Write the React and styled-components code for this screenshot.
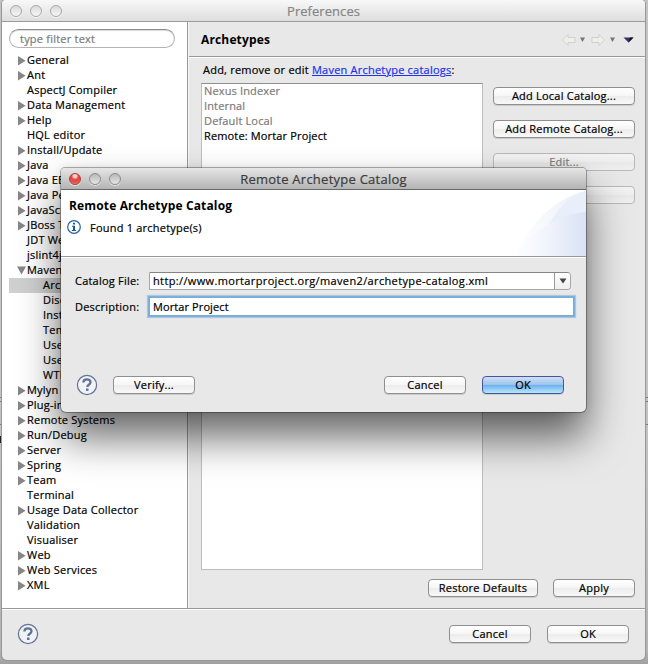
import React from 'react'
import styled, { createGlobalStyle } from 'styled-components'

const tree = [
    { label: 'General', open: false },
    { label: 'Ant', open: false },
    { label: 'AspectJ Compiler' },
    { label: 'Data Management', open: false },
    { label: 'Help', open: false },
    { label: 'HQL editor' },
    { label: 'Install/Update', open: false },
    { label: 'Java', open: false },
    { label: 'Java EE', open: false },
    { label: 'Java Persistence', open: false },
    { label: 'JavaScript', open: false },
    { label: 'JBoss Tools', open: false },
    { label: 'JDT Weaving' },
    { label: 'jslint4java' },
    { label: 'Maven', open: true },
    { label: 'Archetypes', child: true, selected: true },
    { label: 'Discovery', child: true },
    { label: 'Installations', child: true },
    { label: 'Templates', child: true },
    { label: 'User Interface', child: true },
    { label: 'User Settings', child: true },
    { label: 'WTP Integration', child: true },
    { label: 'Mylyn', open: false },
    { label: 'Plug-in Development', open: false },
    { label: 'Remote Systems', open: false },
    { label: 'Run/Debug', open: false },
    { label: 'Server', open: false },
    { label: 'Spring', open: false },
    { label: 'Team', open: false },
    { label: 'Terminal' },
    { label: 'Usage Data Collector', open: false },
    { label: 'Validation' },
    { label: 'Visualiser' },
    { label: 'Web', open: false },
    { label: 'Web Services', open: false },
    { label: 'XML', open: false },
]

const catalogs = [
    { name: 'Nexus Indexer' },
    { name: 'Internal' },
    { name: 'Default Local' },
    { name: 'Remote: Mortar Project', editable: true },
]

const Lights = ({ active }) => (
    <LightGroup>
        <Light $red={active} />
        <Light $dark={active} />
        <Light $dark={active} />
    </LightGroup>
)

const Disclosure = ({ open }) => (
    <svg width="9" height="10" viewBox="0 0 9 10">
        <path d={open ? 'M0 .5h9l-4.5 8z' : 'M1 0v9.4l7.6-4.7z'} fill="#868686" />
    </svg>
)

const HelpIcon = () => (
    <svg width="22" height="22" viewBox="0 0 22 22" fill="none">
        <circle cx="11" cy="11" r="9.6" fill="#f0f2f5" stroke="#607391" strokeWidth="1.2" />
        <path d="M7.4 8.5c0-4.3 7.1-4.1 7.1-.3 0 2.5-3.2 2.6-3.2 4.8" stroke="#5f7393" strokeWidth="2.3" />
        <path d="M10 14.5h2.5v2.4H10z" fill="#5f7393" />
    </svg>
)

const InfoIcon = () => (
    <svg width="14" height="14" viewBox="0 0 14 14" fill="none">
        <circle cx="7" cy="7" r="6.3" fill="#fff" stroke="#22649d" strokeWidth="1.2" />
        <path d="M6 2.7h2v1.8H6zM5 5.8h3v4.3h1.1v1H4.9v-1H6V6.8H5z" fill="#125a97" />
    </svg>
)

const HistoryArrow = ({ forward }) => (
    <svg width="15" height="14" viewBox="0 0 15 14">
        <path
            d={forward ? 'M1 4.5h7V1.5l5.5 5.5L8 12.5v-3H1z' : 'M14 4.5H7V1.5L1.5 7 7 12.5v-3h7z'}
            fill="#eeeeea" stroke="#cfcfcb"
        />
    </svg>
)

const SmallArrow = () => (
    <svg width="5" height="5" viewBox="0 0 5 5"><path d="M0 .5h5L2.5 5z" fill="#777" /></svg>
)

const Banner = () => (
    <svg width="100" height="66" viewBox="0 0 100 66">
        <defs>
            <linearGradient id="swoosh" x1="0" x2="1" y1="0" y2="0">
                <stop offset="0" stopColor="#fff" />
                <stop offset=".5" stopColor="#eff3fb" />
                <stop offset="1" stopColor="#dae2f5" />
            </linearGradient>
            <linearGradient id="haze" x1="0" x2="1" y1="0" y2="0">
                <stop offset="0" stopColor="#fff" />
                <stop offset="1" stopColor="#eaeffa" />
            </linearGradient>
        </defs>
        <path d="M28 66C45 33 68 8 100 1v65z" fill="url(#haze)" />
        <path d="M62 36C72 18 84 5 100 1v34z" fill="#e8eefa" />
        <path d="M28 66C45 43 72 23 100 22v44z" fill="url(#swoosh)" />
    </svg>
)

const App = () => {
    return (
        <Desktop>
            <GlobalStyle />
            <Window>
                <TitleBar>
                    <Lights />
                    <Title>Preferences</Title>
                </TitleBar>

                <Main>
                    <Sidebar>
                        <Filter>type filter text</Filter>
                        {tree.map((item) => (
                            <TreeRow key={item.label} $child={item.child} $selected={item.selected}>
                                <Twisty>{item.open !== undefined && <Disclosure open={item.open} />}</Twisty>
                                {item.label}
                            </TreeRow>
                        ))}
                    </Sidebar>

                    <Page>
                        <PageHeader>
                            <Heading>Archetypes</Heading>
                            <History>
                                <HistoryArrow />
                                <SmallArrow />
                                <HistoryArrow forward />
                                <SmallArrow />
                                <svg width="11" height="6" viewBox="0 0 11 6">
                                    <path d="M.5 .5h10L5.5 5.5z" fill="#35316f" />
                                    <path d="M5.5 5.5l5-5H7z" fill="#111" />
                                </svg>
                            </History>
                        </PageHeader>

                        <Intro>Add, remove or edit <a href="#catalogs">Maven Archetype catalogs</a>:</Intro>

                        <Columns>
                            <CatalogList>
                                {catalogs.map((catalog) => (
                                    <CatalogRow key={catalog.name} $editable={catalog.editable}>{catalog.name}</CatalogRow>
                                ))}
                            </CatalogList>
                            <Actions>
                                <Button>Add Local Catalog...</Button>
                                <Button>Add Remote Catalog...</Button>
                                <Button disabled>Edit...</Button>
                                <Button disabled>Remove</Button>
                            </Actions>
                        </Columns>

                        <PageButtons>
                            <Button $width={110}>Restore Defaults</Button>
                            <Button $width={82}>Apply</Button>
                        </PageButtons>
                    </Page>
                </Main>

                <Footer>
                    <HelpIcon />
                    <ButtonGroup>
                        <Button $width={82}>Cancel</Button>
                        <Button $width={82}>OK</Button>
                    </ButtonGroup>
                </Footer>
            </Window>

            <Dialog>
                <TitleBar $active>
                    <Lights active />
                    <Title $active>Remote Archetype Catalog</Title>
                </TitleBar>
                <DialogHeader>
                    <DialogText>
                        <Heading>Remote Archetype Catalog</Heading>
                        <Message><InfoIcon /> Found 1 archetype(s)</Message>
                    </DialogText>
                    <Banner />
                </DialogHeader>
                <Form>
                    <Field>
                        <FieldName>Catalog File:</FieldName>
                        <Combo>
                            <ComboText>http://www.mortarproject.org/maven2/archetype-catalog.xml</ComboText>
                            <ComboArrow>
                                <svg width="8" height="6" viewBox="0 0 8 6"><path d="M.5 .5h7L4 5.5z" fill="#444" /></svg>
                            </ComboArrow>
                        </Combo>
                    </Field>
                    <Field>
                        <FieldName>Description:</FieldName>
                        <TextInput>Mortar Project</TextInput>
                    </Field>
                </Form>
                <DialogFooter>
                    <HelpIcon />
                    <Verify><Button $width={82}>Verify...</Button></Verify>
                    <ButtonGroup>
                        <Button $width={82}>Cancel</Button>
                        <Button $width={82} $primary>OK</Button>
                    </ButtonGroup>
                </DialogFooter>
            </Dialog>
        </Desktop>
    )
}

export default App

const GlobalStyle = createGlobalStyle`
    * {
        box-sizing: border-box;
    }

    body {
        margin: 0;
        overflow: hidden;
        font-family: 'Open Sans', 'Noto Sans', sans-serif;
        font-size: 11px;
        letter-spacing: 0.22px;
        color: #000;
        -webkit-text-stroke: 0.2px;
    }

    svg {
        display: block;
        flex: none;
    }
`

const Desktop = styled.div`
    position: relative;
    width: 648px;
    height: 664px;
    padding: 0 3px 4px 2px;
    background:
        linear-gradient(#2a2024, #2a2024) 0 436px / 2px 7px no-repeat,
        linear-gradient(#7c7c7c, #7c7c7c) 0 397px / 100% 1px no-repeat,
        linear-gradient(#7c7c7c, #7c7c7c) 0 401px / 100% 1px no-repeat,
        linear-gradient(#7c7c7c, #7c7c7c) 0 424px / 100% 1px no-repeat,
        linear-gradient(#c4c4c4, #c4c4c4 60%, #b4b4b4 98%, #a0a0a0);
`

const Window = styled.div`
    display: flex;
    flex-direction: column;
    height: 660px;
    background: #e8e8e8;
    border-radius: 4px 4px 5px 5px;
    box-shadow: 0 0 0 1px #979797;
    overflow: hidden;
`

const TitleBar = styled.div`
    position: relative;
    display: flex;
    align-items: center;
    justify-content: center;
    flex: none;
    height: 22px;
    background: ${({ $active }) => ($active ? 'linear-gradient(#e6e6e6, #b4b4b4)' : 'linear-gradient(#f8f8f8, #dedede)')};
    border-bottom: 1px solid ${({ $active }) => ($active ? '#686868' : '#9b9b9b')};
`

const LightGroup = styled.div`
    position: absolute;
    left: 8px;
    top: 5px;
    display: flex;
    gap: 8px;
`

const Light = styled.span`
    width: 12px;
    height: 12px;
    border-radius: 50%;
    border: 1px solid ${({ $red, $dark }) => ($red ? '#a3413c' : $dark ? '#8c8c8c' : '#a9a9a9')};
    background: ${({ $red, $dark }) => {
        if ($red) return 'radial-gradient(circle at 50% 20%, #fbd0cc 0 15%, #e5443f 40%, #e2504a 65%, #ff9c94)'
        return $dark ? 'linear-gradient(#b8b8b8, #e6e6e6)' : 'linear-gradient(#dadada, #f6f6f6)'
    }};
    box-shadow: 0 1px 0 rgba(255, 255, 255, 0.6);
`

const Title = styled.span`
    font-size: 13px;
    letter-spacing: ${({ $active }) => ($active ? 0.25 : 0.05)}px;
    color: ${({ $active }) => ($active ? '#3c3c3c' : '#858585')};
`

const Main = styled.div`
    display: flex;
    height: 587px;
    border-bottom: 1px solid #999;
`

const Sidebar = styled.div`
    width: 186px;
    flex: none;
    background: #fff;
    border-right: 1px solid #999;
`

const Filter = styled.div`
    width: 166px;
    height: 19px;
    margin: 7px 0 5px 7px;
    padding-left: 10px;
    line-height: 18px;
    color: #7b7b7b;
    border: 1px solid #b4b4b4;
    border-top-color: #8c8c8c;
    border-radius: 10px;
    box-shadow: inset 0 1px 1px #d9d9d9;
`

const TreeRow = styled.div`
    display: flex;
    height: 15px;
    margin-left: 7px;
    padding-left: ${({ $child }) => ($child ? 24 : 8)}px;
    line-height: 13px;
    white-space: nowrap;
    background: ${({ $selected }) => ($selected ? '#d0d0d0' : 'none')};
`

const Twisty = styled.span`
    display: flex;
    align-items: center;
    width: 10px;
    flex: none;
`

const Page = styled.div`
    flex: 1;
    border-left: 1px solid #f7f7f7;
`

const PageHeader = styled.div`
    display: flex;
    align-items: center;
    justify-content: space-between;
    height: 35px;
    padding: 0 11px 0 12px;
    border-bottom: 1px solid #999;
    box-shadow: 0 1px 0 #fff;
`

const Heading = styled.div`
    font-size: 12px;
    font-weight: bold;
    letter-spacing: 0.15px;
    -webkit-text-stroke: 0;
`

const History = styled.div`
    display: flex;
    align-items: center;
    gap: 4px;
    padding-top: 1px;

    svg:nth-child(3) {
        margin-left: 2px;
    }

    svg:last-child {
        margin-left: 4px;
    }
`

const Intro = styled.div`
    height: 26px;
    padding-left: 14px;
    line-height: 26px;

    a {
        color: #1d32ee;
    }
`

const Columns = styled.div`
    display: flex;
    padding-left: 12px;
`

const CatalogList = styled.div`
    width: 282px;
    height: 487px;
    padding: 0 2px;
    background: #fff;
    border: 1px solid #bdbdbd;
    border-top-color: #8e8e8e;
`

const CatalogRow = styled.div`
    height: 15px;
    line-height: 13px;
    letter-spacing: 0.15px;
    color: ${({ $editable }) => ($editable ? '#000' : '#7b7b7b')};
`

const Actions = styled.div`
    display: flex;
    flex-direction: column;
    gap: 15px;
    width: 142px;
    margin: 4px 0 0 10px;
`

const Button = styled.button`
    width: ${({ $width }) => ($width ? `${$width}px` : '100%')};
    height: 18px;
    flex: none;
    padding: 0 0 1px;
    font: inherit;
    letter-spacing: inherit;
    line-height: 15px;
    color: #000;
    background: linear-gradient(#fff, #f6f6f6 50%, #ececec 51%, #f8f8f8);
    border: 1px solid #8f8f8f;
    border-radius: 4px;
    box-shadow: 0 1px 0 rgba(0, 0, 0, 0.12);

    &:disabled {
        color: #808080;
        background: linear-gradient(#f3f3f3, #eeeeee 50%, #e8e8e8 51%, #f0f0f0);
        border-color: #b9b9b9;
        box-shadow: none;
    }

    ${({ $primary }) => $primary && `
        background: linear-gradient(#cfe0f5, #9cc4ee 48%, #6fb0ee 52%, #b5e8fb);
        border-color: #4a55a0;
    `}
`

const PageButtons = styled.div`
    display: flex;
    justify-content: flex-end;
    gap: 15px;
    padding: 9px 10px 0 0;
`

const Footer = styled.div`
    display: flex;
    align-items: center;
    justify-content: space-between;
    flex: 1;
    padding: 0 16px 2px 15px;
    border-top: 1px solid #fff;
`

const ButtonGroup = styled.div`
    display: flex;
    gap: 16px;
`

const Dialog = styled.div`
    position: absolute;
    left: 61px;
    top: 168px;
    width: 525px;
    height: 244px;
    background: #e8e8e8;
    border-radius: 4px 4px 5px 5px;
    box-shadow: 0 0 0 1px rgba(0, 0, 0, 0.3), 0 0 8px rgba(0, 0, 0, 0.1), 0 25px 42px rgba(0, 0, 0, 0.6);

    > :first-child {
        border-radius: 4px 4px 0 0;
    }
`

const DialogHeader = styled.div`
    display: flex;
    justify-content: space-between;
    height: 67px;
    background: #fff;
    border-bottom: 1px solid #999;
    box-shadow: 0 1px 0 #fff;
`

const DialogText = styled.div`
    padding: 7px 0 0 8px;
`

const Message = styled.div`
    display: flex;
    align-items: center;
    gap: 9px;
    margin: 6px 0 0 -2px;
    line-height: 13px;
`

const Form = styled.div`
    display: flex;
    flex-direction: column;
    gap: 8px;
    padding: 15px 0 0 14px;
`

const Field = styled.div`
    display: flex;
    height: 18px;
    line-height: 17px;
`

const FieldName = styled.div`
    width: 74px;
    flex: none;
`

const Combo = styled.div`
    display: flex;
    width: 422px;
    height: 18px;
    line-height: 16px;
    background: #fff;
    border: 1px solid #a6a6a6;
    border-top-color: #858585;
    border-radius: 0 4px 4px 0;
    overflow: hidden;
`

const ComboText = styled.div`
    flex: 1;
    padding-left: 3px;
    letter-spacing: 0.36px;
`

const ComboArrow = styled.div`
    display: flex;
    align-items: center;
    justify-content: center;
    width: 16px;
    background: linear-gradient(#fff, #eee);
    border-left: 1px solid #999;
`

const TextInput = styled.div`
    width: 423px;
    height: 17px;
    margin-left: 1px;
    padding-left: 3px;
    letter-spacing: 0.1px;
    background: #fff;
    box-shadow: 0 0 0 1px #7cabd4, 0 0 0 2px #7cafdb, 0 0 1px 3px #a9c9e3;
`

const DialogFooter = styled.div`
    display: flex;
    align-items: center;
    padding: 58px 22px 0 15px;
`

const Verify = styled.div`
    flex: 1;
    margin-left: 15px;
`
